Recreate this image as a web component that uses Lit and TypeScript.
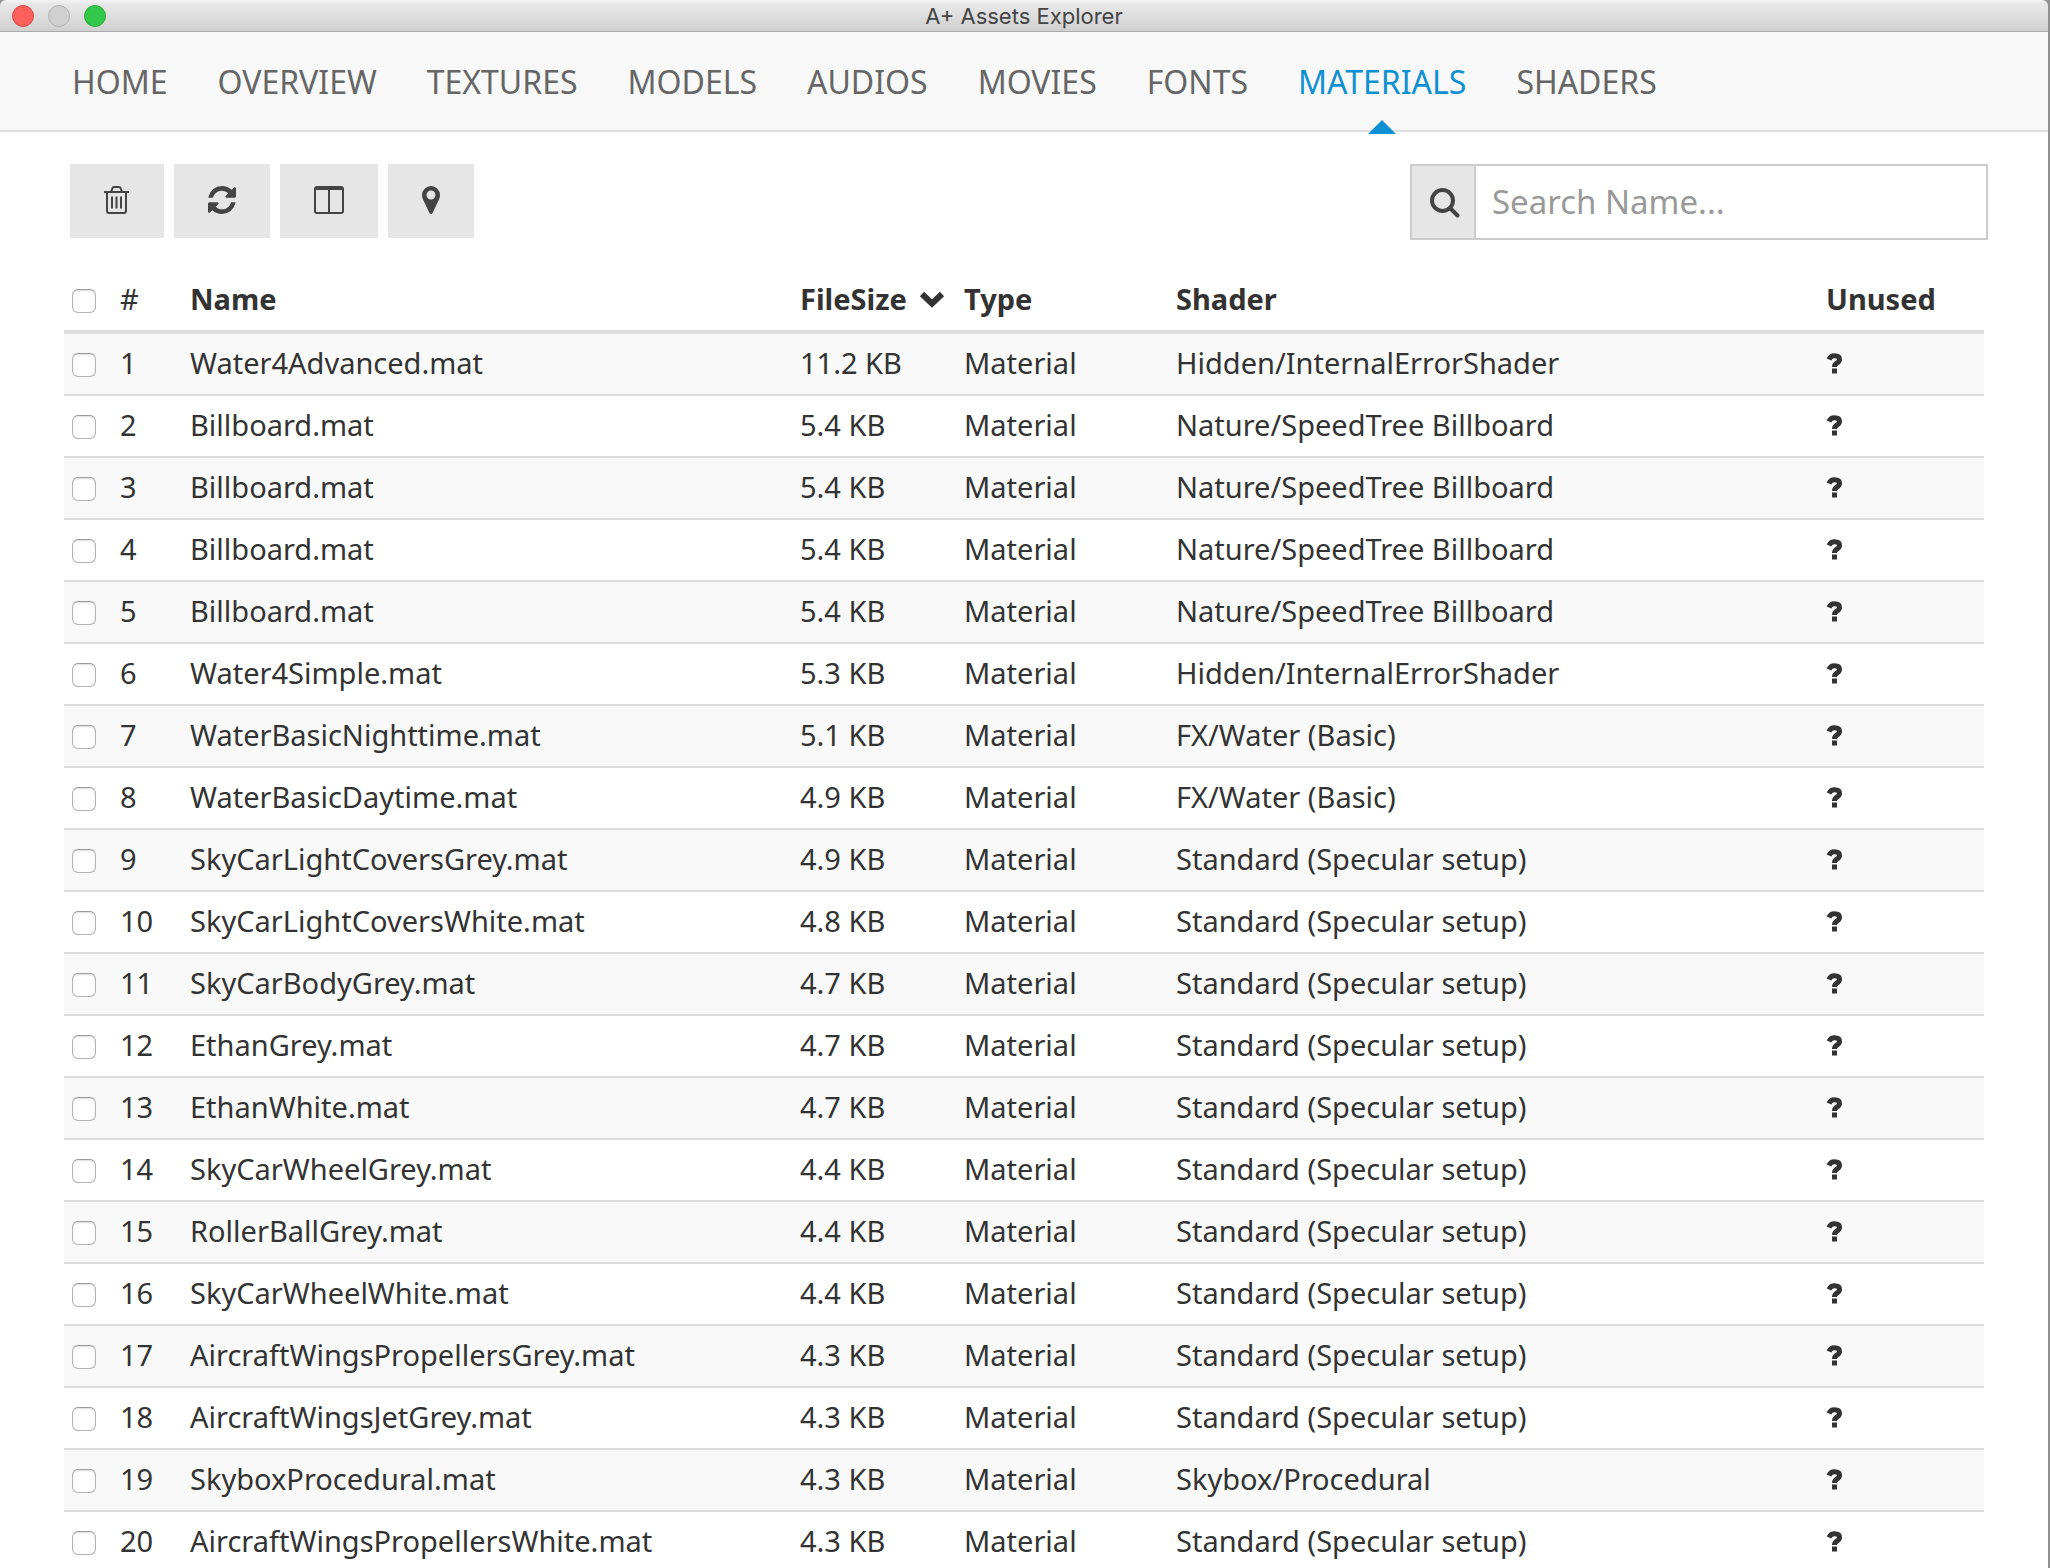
import { LitElement, html, css, svg } from "lit";
import { customElement, state } from "lit/decorators.js";

interface Asset {
  name: string;
  size: string;
  shader: string;
}

const SPEC = "Standard (Specular setup)";
const TREE = "Nature/SpeedTree Billboard";
const ERR = "Hidden/InternalErrorShader";

const ASSETS: Asset[] = [
  { name: "Water4Advanced.mat", size: "11.2 KB", shader: ERR },
  { name: "Billboard.mat", size: "5.4 KB", shader: TREE },
  { name: "Billboard.mat", size: "5.4 KB", shader: TREE },
  { name: "Billboard.mat", size: "5.4 KB", shader: TREE },
  { name: "Billboard.mat", size: "5.4 KB", shader: TREE },
  { name: "Water4Simple.mat", size: "5.3 KB", shader: ERR },
  { name: "WaterBasicNighttime.mat", size: "5.1 KB", shader: "FX/Water (Basic)" },
  { name: "WaterBasicDaytime.mat", size: "4.9 KB", shader: "FX/Water (Basic)" },
  { name: "SkyCarLightCoversGrey.mat", size: "4.9 KB", shader: SPEC },
  { name: "SkyCarLightCoversWhite.mat", size: "4.8 KB", shader: SPEC },
  { name: "SkyCarBodyGrey.mat", size: "4.7 KB", shader: SPEC },
  { name: "EthanGrey.mat", size: "4.7 KB", shader: SPEC },
  { name: "EthanWhite.mat", size: "4.7 KB", shader: SPEC },
  { name: "SkyCarWheelGrey.mat", size: "4.4 KB", shader: SPEC },
  { name: "RollerBallGrey.mat", size: "4.4 KB", shader: SPEC },
  { name: "SkyCarWheelWhite.mat", size: "4.4 KB", shader: SPEC },
  { name: "AircraftWingsPropellersGrey.mat", size: "4.3 KB", shader: SPEC },
  { name: "AircraftWingsJetGrey.mat", size: "4.3 KB", shader: SPEC },
  { name: "SkyboxProcedural.mat", size: "4.3 KB", shader: "Skybox/Procedural" },
  { name: "AircraftWingsPropellersWhite.mat", size: "4.3 KB", shader: SPEC },
];

const TABS = ["Home", "Overview", "Textures", "Models", "Audios", "Movies", "Fonts", "Materials", "Shaders"];

const trashIcon = svg`<svg class="icon" width="26" height="28" viewBox="0 0 26 28" fill="none" stroke="currentColor" aria-hidden="true">
  <path d="M0 6h25" stroke-width="2"/>
  <path d="M7 6l1.2-3.4Q8.6 1 10.2 1h4.6q1.600 0 2 1.600L18 6" stroke-width="2"/>
  <path d="M3 6v18.500Q3 27 5 27h15q2 0 2-2.500V6" stroke-width="2"/>
  <path d="M8 10.500v12M12.500 10.500v12M17 10.500v12" stroke-width="2"/>
</svg>`;

const refreshIcon = svg`<svg class="icon" width="28" height="28" viewBox="0 0 1536 1536" fill="currentColor" aria-hidden="true">
  <path d="M1511 928q0 5-1 7-64 268-268 434.500T764 1536q-146 0-282.500-55T238 1324l-129 129q-19 19-45 19t-45-19-19-45V960q0-26 19-45t45-19h448q26 0 45 19t19 45-19 45l-137 137q71 66 161 102t187 36q134 0 250-65t186-179q11-17 53-117 8-23 30-23h192q13 0 22.500 9.500t9.500 22.500zM1536 128v448q0 26-19 45t-45 19h-448q-26 0-45-19t-19-45 19-45l138-138Q969 256 768 256q-134 0-250 65T332 500q-11 17-53 117-8 23-30 23H50q-13 0-22.500-9.500T18 608v-7q65-268 270-434.500T768 0q146 0 284 55.500T1297 212l130-129q19-19 45-19t45 19 19 45z"/>
</svg>`;

const columnsIcon = svg`<svg class="icon" width="30" height="28" viewBox="0 0 30 28" fill="none" stroke="currentColor" aria-hidden="true">
  <rect x="1" y="1" width="28" height="26" rx="2" stroke-width="2"/>
  <path d="M1 2.500h28" stroke-width="3"/>
  <path d="M15 3v24" stroke-width="2"/>
</svg>`;

const markerIcon = svg`<svg class="icon" width="18" height="28" viewBox="0 0 18 28" fill="currentColor" fill-rule="evenodd" aria-hidden="true">
  <path d="M9 0a9 9 0 0 1 9 9c0 1.600-.3 2.900-.8 4l-6.500 13.800q-.6 1.200-1.700 1.200t-1.700-1.200L.8 13C.3 11.900 0 10.600 0 9a9 9 0 0 1 9-9zM9 4.500a4.500 4.500 0 1 0 0 9 4.500 4.500 0 0 0 0-9z"/>
</svg>`;

const searchIcon = svg`<svg class="icon" width="30" height="30" viewBox="0 0 30 30" fill="none" stroke="currentColor" aria-hidden="true">
  <circle cx="12.500" cy="12.500" r="10.500" stroke-width="4"/>
  <path d="M20 20l7.500 7.500" stroke-width="4" stroke-linecap="round"/>
</svg>`;

const sortIcon = svg`<svg class="sort" width="26" height="18" viewBox="0 0 26 18" fill="none" stroke="currentColor" aria-hidden="true">
  <path d="M3 4l10 9.500L23 4" stroke-width="6"/>
</svg>`;

const questionIcon = svg`<svg class="unknown" width="17" height="21" viewBox="0 0 17 21" role="img" aria-label="Unknown">
  <path d="M3 6.500Q4.500 2.700 8.500 2.700q5 0 5 3.800 0 2-2.500 3.500-2.500 1.500-2.500 4" fill="none" stroke="currentColor" stroke-width="5"/>
  <rect x="6" y="15.500" width="5" height="5" fill="currentColor"/>
</svg>`;

@customElement("app-root")
export class AppRoot extends LitElement {
  @state() private active = "Materials";
  @state() private query = "";

  static styles = css`
    :host {
      display: block;
      height: 100vh;
      overflow: hidden;
      box-sizing: border-box;
      border-right: 2px solid #8e8e8e;
      background: #fff;
      color: #333;
      font: 29px/40px "Noto Sans", "Open Sans", sans-serif;
    }
    * { box-sizing: border-box; }
    .frame { background: #999; }
    .titlebar {
      display: grid;
      grid-template-columns: 1fr auto 1fr;
      align-items: center;
      height: 32px;
      padding: 0 12px;
      border-bottom: 1px solid #aaa;
      border-radius: 6px 6px 0 0;
      background: linear-gradient(#f4f4f4, #e8e8e8 12%, #d0d0d0);
    }
    .lights { display: flex; gap: 14px; }
    .light {
      width: 22px;
      height: 22px;
      padding: 0;
      border: 1px solid #b4b4b4;
      border-radius: 50%;
      background: #d0d0d0;
    }
    .close { background: #fc605c; border-color: #e2453f; }
    .zoom { background: #34c84a; border-color: #24ac34; }
    .title {
      margin: 0;
      padding-top: 1px;
      color: #444;
      font: 400 22px/30px Inter, Roboto, sans-serif;
    }
    .tabs {
      display: flex;
      gap: 50px;
      padding: 0 72px;
      border-bottom: 2px solid #ddd;
      background: #f8f8f8;
    }
    .tab {
      position: relative;
      height: 98px;
      padding-top: 2px;
      color: #666;
      font-size: 32px;
      line-height: 96px;
      text-decoration: none;
      text-transform: uppercase;
    }
    .tab.on { color: #0e90d2; }
    .tab.on::after {
      content: "";
      position: absolute;
      left: 50%;
      bottom: -4px;
      margin-left: -14px;
      border: 14px solid transparent;
      border-top: 0;
      border-bottom-color: #0e90d2;
    }
    .toolbar {
      display: flex;
      justify-content: space-between;
      align-items: flex-start;
      padding: 32px 60px 0 70px;
    }
    .actions { display: flex; gap: 10px; }
    .action {
      height: 74px;
      padding: 0 34px 2px;
      border: 0;
      background: #e6e6e6;
      color: #444;
    }
    .icon { display: block; }
    .search {
      display: flex;
      width: 578px;
      height: 76px;
      border: 2px solid #ccc;
    }
    .search-label {
      display: flex;
      align-items: center;
      padding: 2px 14px 0 18px;
      border-right: 2px solid #ccc;
      background: #e6e6e6;
      color: #444;
    }
    .search-input {
      flex: 1;
      min-width: 0;
      padding: 0 16px;
      border: 0;
      outline: 0;
      background: #fff;
      color: #444;
      font: inherit;
      font-size: 33px;
    }
    .search-input::placeholder { color: #999; opacity: 1; }
    .content { padding: 28px 64px 0; }
    .assets {
      width: 100%;
      border-collapse: separate;
      border-spacing: 0;
      table-layout: fixed;
      text-align: left;
    }
    .assets th, .assets td {
      height: 62px;
      padding: 0 8px 2px;
      border-bottom: 2px solid #ddd;
      vertical-align: middle;
      white-space: nowrap;
    }
    .assets th {
      height: 66px;
      padding-bottom: 0;
      border-bottom-width: 4px;
    }
    .assets .plain { font-weight: 400; }
    .assets tbody tr:nth-child(odd) { background: #f9f9f9; }
    .c-check { width: 48px; }
    .c-num { width: 70px; }
    .c-name { width: 610px; }
    .c-size { width: 164px; }
    .c-type { width: 212px; }
    .c-unused { width: 166px; }
    .check {
      appearance: none;
      display: block;
      width: 24px;
      height: 24px;
      margin: 4px 0 0;
      border: 1px solid #b4b4b4;
      border-top-color: #999;
      border-radius: 6px;
      background: #fff;
      box-shadow: inset 0 1px 2px #ddd;
    }
    .sorter {
      display: flex;
      align-items: center;
      gap: 12px;
      padding: 0;
      border: 0;
      background: none;
      color: inherit;
      font: inherit;
    }
    .unknown { display: block; }
  `;

  render() {
    const q = this.query.toLowerCase();
    const rows = ASSETS.filter((a) => a.name.toLowerCase().includes(q));
    return html`
      <div class="frame">
        <header class="titlebar">
          <div class="lights">
            <button class="light close" aria-label="Close"></button>
            <button class="light" aria-label="Minimize"></button>
            <button class="light zoom" aria-label="Zoom"></button>
          </div>
          <h1 class="title">A+ Assets Explorer</h1>
        </header>
      </div>
      <nav class="tabs">
        ${TABS.map((t) => html`<a class="tab ${t === this.active ? "on" : ""}" href="#${t.toLowerCase()}"
          @click=${() => (this.active = t)}>${t}</a>`)}
      </nav>
      <div class="toolbar">
        <div class="actions">
          <button class="action" aria-label="Delete">${trashIcon}</button>
          <button class="action" aria-label="Refresh">${refreshIcon}</button>
          <button class="action" aria-label="Columns">${columnsIcon}</button>
          <button class="action" aria-label="Locate">${markerIcon}</button>
        </div>
        <div class="search">
          <label class="search-label" for="search" aria-label="Search">${searchIcon}</label>
          <input class="search-input" id="search" type="text" placeholder="Search Name..."
            @input=${(e: Event) => (this.query = (e.target as HTMLInputElement).value)}>
        </div>
      </div>
      <main class="content">
        <table class="assets">
          <thead>
            <tr>
              <th class="c-check"><input class="check" type="checkbox" aria-label="Select all"></th>
              <th class="c-num plain">#</th>
              <th class="c-name">Name</th>
              <th class="c-size"><button class="sorter">FileSize ${sortIcon}</button></th>
              <th class="c-type">Type</th>
              <th>Shader</th>
              <th class="c-unused">Unused</th>
            </tr>
          </thead>
          <tbody>
            ${rows.map((a, i) => html`<tr>
              <td><input class="check" type="checkbox" aria-label="Select ${a.name}"></td>
              <td>${i + 1}</td>
              <td>${a.name}</td>
              <td>${a.size}</td>
              <td>Material</td>
              <td>${a.shader}</td>
              <td>${questionIcon}</td>
            </tr>`)}
          </tbody>
        </table>
      </main>
    `;
  }
}
